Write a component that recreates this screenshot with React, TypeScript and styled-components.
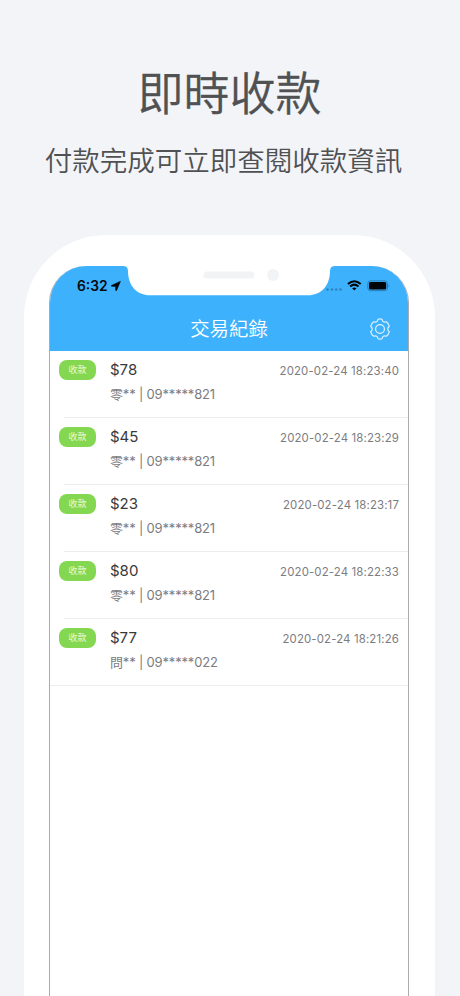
import React from "react";
import styled, { createGlobalStyle } from "styled-components";

const GlobalStyle = createGlobalStyle`
  * { box-sizing: border-box; }
  body { margin: 0; background: #f3f4f8; }
`;

const Page = styled.main`
  width: 460px;
  height: 996px;
  overflow: hidden;
  display: flex;
  flex-direction: column;
  align-items: center;
  background: #f3f4f8;
  font-family: Inter, "Noto Sans CJK TC", sans-serif;
`;

const Hero = styled.header`
  height: 235px;
  flex: none;
  padding-top: 60px;
  color: #505152;
  text-align: center;
  font-family: "Noto Sans CJK TC", sans-serif;
`;

const Headline = styled.h1`
  margin: 0 1px 0 0;
  font-size: 46px;
  font-weight: 350;
  line-height: 60px;
  -webkit-text-stroke: 0.3px #505152;
`;

const Subline = styled.p`
  margin: 19px 13px 0 0;
  font-size: 27.5px;
  font-weight: 350;
  line-height: 40px;
  white-space: nowrap;
`;

const Phone = styled.section`
  width: 411px;
  height: 840px;
  flex: none;
  margin-right: 1px;
  padding: 31px 26px 0 25px;
  border-radius: 82px 82px 0 0;
  background: #fff;
`;

const Screen = styled.div`
  height: 100%;
  border: solid #aaabad;
  border-width: 0 1px;
  border-radius: 37px 37px 0 0;
  background: #fff;
  overflow: hidden;
`;

const AppHeader = styled.div`
  position: relative;
  height: 84.5px;
  background: #3eb1fc;
`;

const Notch = styled.svg`
  position: absolute;
  left: 73px;
  top: 0;
`;

const StatusBar = styled.div`
  position: relative;
  display: flex;
  align-items: center;
  justify-content: space-between;
  height: 40px;
  padding: 0 18px 0 27px;
`;

const Clock = styled.div`
  display: flex;
  align-items: center;
  gap: 3px;
  color: #05090c;
  font-size: 13.8px;
  font-weight: 600;
`;

const Indicators = styled.div`
  display: flex;
  align-items: center;
`;

const TitleBar = styled.div`
  display: grid;
  grid-template-columns: 1fr auto 1fr;
  align-items: center;
  height: 46px;
  padding-right: 17px;
  color: #fff;
`;

const Title = styled.h2`
  grid-column: 2;
  margin: 0 -17px 0 0;
  font-size: 19.4px;
  font-weight: 350;
  line-height: 28px;
`;

const GearButton = styled.button`
  justify-self: end;
  display: flex;
  padding: 0;
  border: 0;
  background: none;
  color: #e4f5ff;
`;

const List = styled.ul`
  margin: 0;
  padding: 0;
  list-style: none;
`;

const Row = styled.li`
  position: relative;
  display: grid;
  grid-template-columns: 51px 1fr auto;
  height: 67.1px;
  padding: 9px 9px 0;

  &::after {
    content: "";
    position: absolute;
    left: 14px;
    right: 0;
    bottom: 0;
    height: 1px;
    background: #ededef;
  }

  &:last-child::after {
    left: 0;
  }
`;

const Tag = styled.span`
  width: 37px;
  height: 20px;
  border-radius: 8px;
  background: #84d750;
  color: #f4fff0;
  font-size: 9px;
  font-weight: 350;
  line-height: 20px;
  text-align: center;
`;

const Amount = styled.div`
  color: #39393b;
  font-size: 15px;
  line-height: 20px;
`;

const Payer = styled.div`
  margin-top: 3px;
  color: #7c7c7f;
  font-size: 13px;
  line-height: 22px;
  letter-spacing: -0.18px;
  white-space: nowrap;
`;

const Time = styled.time`
  color: #7c7c7f;
  font-size: 11.4px;
  line-height: 22px;
  letter-spacing: 0.15px;
`;

const records = [
  { amount: "$78", payer: "零** | 09*****821", time: "2020-02-24 18:23:40" },
  { amount: "$45", payer: "零** | 09*****821", time: "2020-02-24 18:23:29" },
  { amount: "$23", payer: "零** | 09*****821", time: "2020-02-24 18:23:17" },
  { amount: "$80", payer: "零** | 09*****821", time: "2020-02-24 18:22:33" },
  { amount: "$77", payer: "問** | 09*****022", time: "2020-02-24 18:21:26" },
];

const LocationIcon = () => (
  <svg width="10" height="10" viewBox="0 0 10 10">
    <path d="M9.5.3.4 4.4q-.6.6.2.9L4.5 5.5 4.7 9.4q.2.7.9.1z" fill="#05090c" stroke="#05090c" strokeWidth=".5" strokeLinejoin="round" />
  </svg>
);

const StatusIcons = () => (
  <svg width="66" height="14" viewBox="0 0 66 14">
    <g fill="#2f83bd">
      <circle cx="3.5" cy="10.5" r="1.3" />
      <circle cx="8" cy="10.5" r="1.3" />
      <circle cx="12.2" cy="10.5" r="1.3" />
      <circle cx="16.5" cy="10.5" r="1.3" />
    </g>
    <g fill="none" stroke="#05090c" strokeWidth="2">
      <path d="M23.9 5.1Q30.3 -.7 36.7 5.1" />
      <path d="M26.1 7.5Q30.3 3.8 34.5 7.5" />
    </g>
    <path d="M28.1 9.3Q30.3 7.6 32.5 9.3L30.3 11.6z" fill="#05090c" />
    <rect x="43.8" y="1.9" width="19.6" height="9.8" rx="2.7" fill="none" stroke="#287cb4" />
    <rect x="45" y="3.1" width="17.2" height="7.4" rx="1.5" fill="#020507" />
    <path d="M64.6 5.2q1.8 1.5 0 3.2z" fill="#287cb4" />
  </svg>
);

const GearIcon = () => (
  <svg width="22" height="22" viewBox="0 0 22 22" fill="none" stroke="currentColor" strokeWidth="1.15" strokeLinejoin="round">
    <path d="M9 1.2Q11 .4 13 1.2C13.3 3.8 14.9 4.7 17.3 3.7Q19.5 5.2 20.3 8.2C18.2 9.9 18.2 12.1 20.3 13.8Q19.5 16.8 17.3 18.3C14.9 17.3 13.3 18.2 13 20.8Q11 21.6 9 20.8C8.7 18.2 7.1 17.3 4.7 18.3Q2.5 16.8 1.7 13.8C3.8 12.1 3.8 9.9 1.7 8.2Q2.5 5.2 4.7 3.7C7.1 4.7 8.7 3.8 9 1.2Z" />
    <circle cx="11" cy="11" r="4.4" />
  </svg>
);

export default function App() {
  return (
    <Page>
      <GlobalStyle />
      <Hero>
        <Headline>即時收款</Headline>
        <Subline>付款完成可立即查閱收款資訊</Subline>
      </Hero>
      <Phone>
        <Screen>
          <AppHeader>
            <Notch width="212" height="30" viewBox="0 0 212 30">
              <path d="M0 0Q5 0 5 5C5 20 14 29.3 27 29.3H185C198 29.3 207 20 207 5Q207 0 212 0Z" fill="#fff" />
              <rect x="80.5" y="5.5" width="51" height="7" rx="3.5" fill="#f2f3f4" />
              <circle cx="150" cy="9" r="6" fill="#f2f3f4" />
            </Notch>
            <StatusBar>
              <Clock>
                6:32
                <LocationIcon />
              </Clock>
              <Indicators>
                <StatusIcons />
              </Indicators>
            </StatusBar>
            <TitleBar>
              <Title>交易紀錄</Title>
              <GearButton aria-label="設定">
                <GearIcon />
              </GearButton>
            </TitleBar>
          </AppHeader>
          <List>
            {records.map((r) => (
              <Row key={r.time}>
                <Tag>收款</Tag>
                <div>
                  <Amount>{r.amount}</Amount>
                  <Payer>{r.payer}</Payer>
                </div>
                <Time>{r.time}</Time>
              </Row>
            ))}
          </List>
        </Screen>
      </Phone>
    </Page>
  );
}
